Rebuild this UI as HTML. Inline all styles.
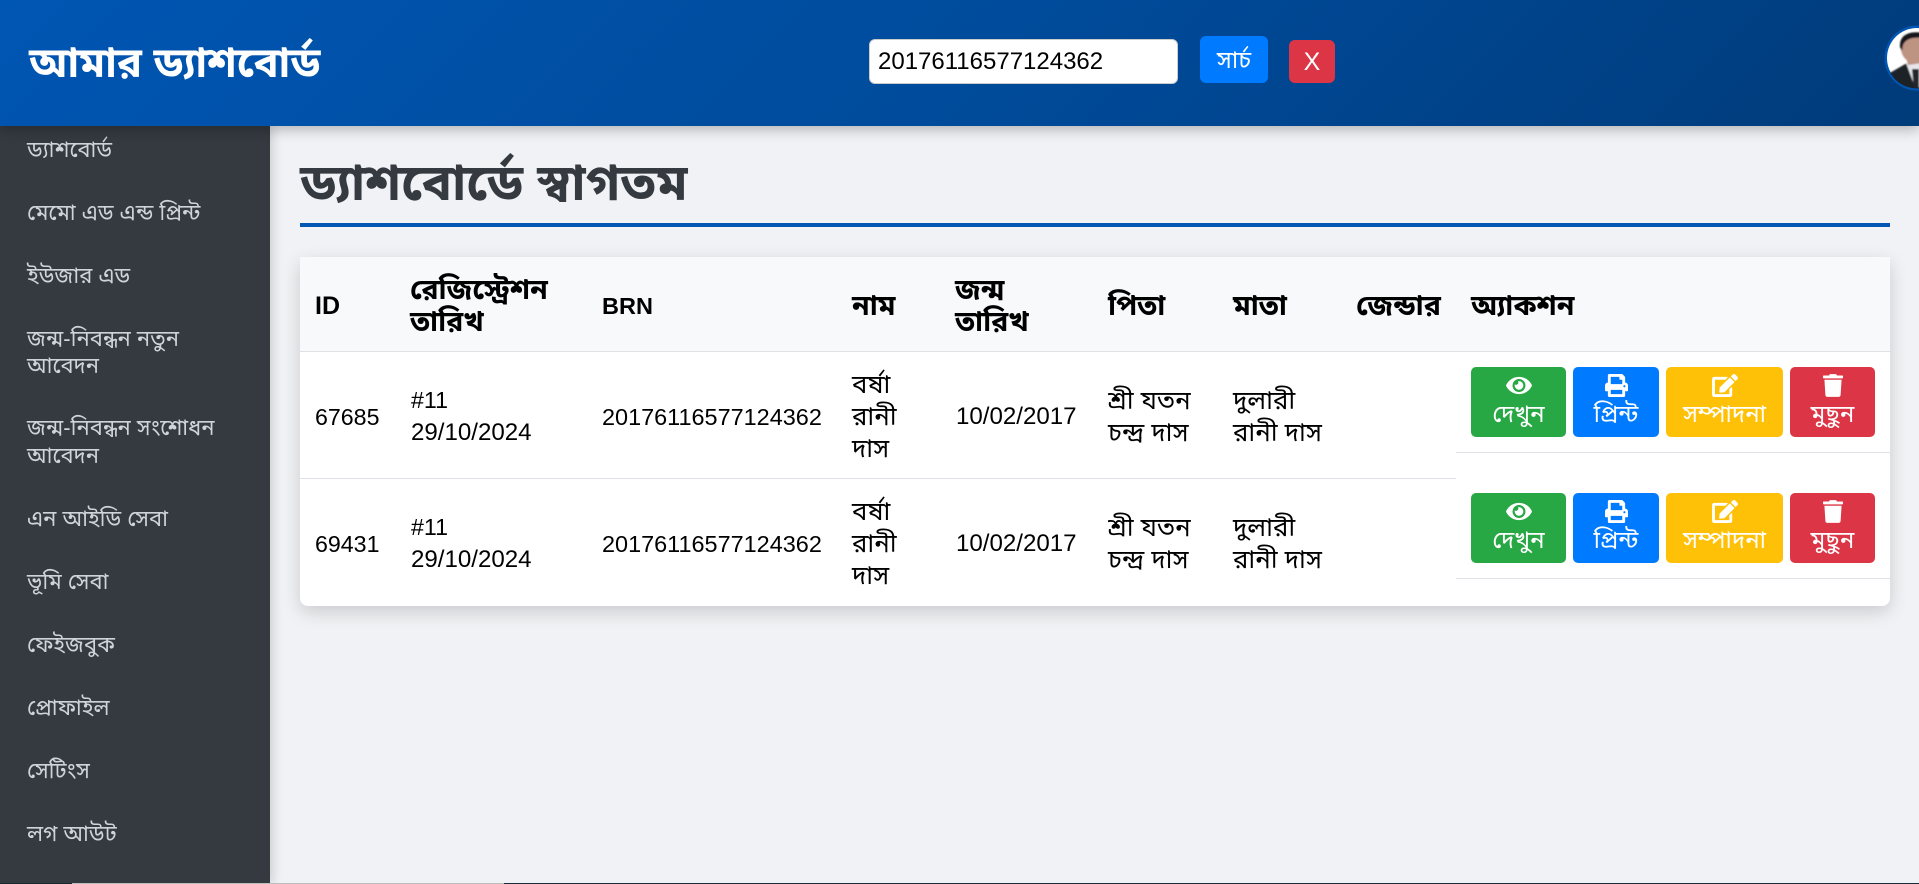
<!DOCTYPE html>
<html lang="bn"><head><meta charset="utf-8"><title>আমার ড্যাশবোর্ড</title>
<style>
*{box-sizing:border-box;margin:0;padding:0}
html,body{width:1919px;height:884px;overflow:hidden}
body{background:#f0f2f5;font-family:"Liberation Sans","Noto Sans Bengali","Noto Sans CJK SC",sans-serif;position:relative;color:#000}
.t{position:absolute;white-space:nowrap;line-height:32px;font-size:25.8px}
.th{font-weight:bold;font-size:28.5px}
.id{font-size:23.2px}.brn{font-size:23.45px}.dt{font-size:24.1px}
#header{position:absolute;left:0;top:0;width:1919px;height:126px;background:linear-gradient(135deg,#0056b3 0%,#004a99 55%,#003b7a 100%);box-shadow:0 4px 12px rgba(0,0,0,.25);z-index:3}
#side{position:absolute;left:0;top:126px;width:270px;height:758px;background:#343a40;box-shadow:3px 0 10px rgba(0,0,0,.15);z-index:2}
#side .t{left:27px;color:#ced4da;font-size:22px;line-height:27px}
#brand{position:absolute;left:29px;top:40px;color:#fff;font-weight:bold;font-size:41.7px;line-height:46px;white-space:nowrap}
#input{position:absolute;left:869px;top:39px;width:309px;height:45px;background:#fff;border:1px solid #ccc;border-radius:6px;font-size:24px;line-height:43px;padding-left:8px;color:#000;font-family:"Liberation Sans",Arial,sans-serif}
.hb{position:absolute;color:#fff;border-radius:6px;text-align:center;font-size:24px}
#h1{position:absolute;left:300px;top:152px;font-size:50.7px;line-height:62px;font-weight:bold;color:#343a40;white-space:nowrap}
#rule{position:absolute;left:300px;top:223px;width:1590px;height:4px;background:#0056b3}
#card{position:absolute;left:300px;top:257px;width:1590px;height:349px;background:#fff;border-radius:0 0 8px 8px;box-shadow:0 6px 18px rgba(0,0,0,.16);overflow:hidden}
#thead{position:absolute;left:300px;top:257px;width:1590px;height:95px;background:#f8f9fa;border-bottom:1px solid #dee2e6}
.ln{position:absolute;height:1px;background:#dee2e6}
.btn{position:absolute;height:70px;border-radius:5px;color:#fff;text-align:center;font-size:24px;line-height:30px}
.btn svg{position:absolute;top:7px;left:50%;height:23px;fill:#fff}
.btn span{position:absolute;left:0;right:0;top:33px;white-space:nowrap}
.g{background:#28a745}.p{background:#007bff}.y{background:#ffc107}.r{background:#dc3545}
</style></head><body>

<div id="card"></div>
<div id="thead"></div>
<div class="ln" style="left:300px;top:478px;width:1156px"></div>
<div class="ln" style="left:1456px;top:452px;width:434px"></div>
<div class="ln" style="left:1456px;top:578px;width:434px"></div>

<div id="h1">ড্যাশবোর্ডে স্বাগতম</div>
<div id="rule"></div>

<div class="t th" style="left:315px;top:290px;font-size:25px">ID</div>
<div class="t th" style="left:410px;top:274px">রেজিস্ট্রেশন</div>
<div class="t th" style="left:410px;top:306px">তারিখ</div>
<div class="t th" style="left:602px;top:290px;font-size:23.5px">BRN</div>
<div class="t th" style="left:852px;top:290px">নাম</div>
<div class="t th" style="left:955px;top:274px">জন্ম</div>
<div class="t th" style="left:955px;top:306px">তারিখ</div>
<div class="t th" style="left:1108px;top:290px">পিতা</div>
<div class="t th" style="left:1233px;top:290px">মাতা</div>
<div class="t th" style="left:1356px;top:290px">জেন্ডার</div>
<div class="t th" style="left:1471px;top:290px">অ্যাকশন</div>

<div class="t id" style="left:315px;top:401px">67685</div>
<div class="t id" style="left:411px;top:384px">#11</div>
<div class="t dt" style="left:411px;top:417px">29/10/2024</div>
<div class="t brn" style="left:602px;top:401px">20176116577124362</div>
<div class="t" style="left:852px;top:369px">বর্ষা</div>
<div class="t" style="left:852px;top:401px">রানী</div>
<div class="t" style="left:852px;top:433px">দাস</div>
<div class="t dt" style="left:956px;top:401px">10/02/2017</div>
<div class="t" style="left:1108px;top:385px">শ্রী যতন</div>
<div class="t" style="left:1108px;top:417px">চন্দ্র দাস</div>
<div class="t" style="left:1233px;top:385px">দুলারী</div>
<div class="t" style="left:1233px;top:417px">রানী দাস</div>

<div class="t id" style="left:315px;top:528px">69431</div>
<div class="t id" style="left:411px;top:511px">#11</div>
<div class="t dt" style="left:411px;top:544px">29/10/2024</div>
<div class="t brn" style="left:602px;top:528px">20176116577124362</div>
<div class="t" style="left:852px;top:496px">বর্ষা</div>
<div class="t" style="left:852px;top:528px">রানী</div>
<div class="t" style="left:852px;top:560px">দাস</div>
<div class="t dt" style="left:956px;top:528px">10/02/2017</div>
<div class="t" style="left:1108px;top:512px">শ্রী যতন</div>
<div class="t" style="left:1108px;top:544px">চন্দ্র দাস</div>
<div class="t" style="left:1233px;top:512px">দুলারী</div>
<div class="t" style="left:1233px;top:544px">রানী দাস</div>

<div class="btn g" style="left:1471px;top:367px;width:95px"><svg viewBox="0 0 576 512" style="width:26px;margin-left:-13px"><path d="M572.52 241.4C518.29 135.59 410.93 64 288 64S57.68 135.64 3.48 241.41a32.35 32.35 0 0 0 0 29.19C57.71 376.41 165.07 448 288 448s230.32-71.64 284.52-177.41a32.35 32.35 0 0 0 0-29.19zM288 400a144 144 0 1 1 144-144 143.93 143.93 0 0 1-144 144zm0-240a95.31 95.31 0 0 0-25.31 3.79 47.85 47.85 0 0 1-66.9 66.9A95.78 95.78 0 1 0 288 160z"/></svg><span>দেখুন</span></div>
<div class="btn p" style="left:1573px;top:367px;width:86px"><svg viewBox="0 0 512 512" style="width:23px;margin-left:-11.5px"><path d="M448 192V77.25c0-8.49-3.37-16.62-9.37-22.63L393.37 9.37c-6-6-14.14-9.37-22.63-9.37H96C78.33 0 64 14.33 64 32v160c-35.35 0-64 28.65-64 64v112c0 8.84 7.16 16 16 16h48v96c0 17.67 14.33 32 32 32h320c17.67 0 32-14.33 32-32v-96h48c8.84 0 16-7.16 16-16V256c0-35.35-28.65-64-64-64zm-64 256H128v-96h256v96zm0-224H128V64h192v48c0 8.84 7.16 16 16 16h48v96zm48 72c-13.25 0-24-10.75-24-24 0-13.26 10.75-24 24-24s24 10.74 24 24c0 13.25-10.75 24-24 24z"/></svg><span>প্রিন্ট</span></div>
<div class="btn y" style="left:1666px;top:367px;width:117px"><svg viewBox="0 0 576 512" style="width:26px;margin-left:-13px"><path d="M402.6 83.2l90.2 90.2c3.8 3.8 3.8 10 0 13.8L274.4 405.6l-92.8 10.3c-12.4 1.4-22.9-9.1-21.5-21.5l10.3-92.8L388.8 83.2c3.8-3.8 10-3.8 13.8 0zm162-22.9l-48.8-48.8c-15.2-15.2-39.9-15.2-55.2 0l-35.4 35.4c-3.8 3.8-3.8 10 0 13.8l90.2 90.2c3.8 3.8 10 3.8 13.8 0l35.4-35.4c15.2-15.3 15.2-40 0-55.2zM384 346.2V448H64V128h229.8c3.2 0 6.2-1.3 8.5-3.5l40-40c7.6-7.6 2.2-20.5-8.5-20.5H48C21.5 64 0 85.5 0 112v352c0 26.5 21.5 48 48 48h352c26.5 0 48-21.5 48-48V306.2c0-10.7-12.9-16-20.5-8.5l-40 40c-2.2 2.3-3.5 5.3-3.5 8.5z"/></svg><span>সম্পাদনা</span></div>
<div class="btn r" style="left:1790px;top:367px;width:85px"><svg viewBox="0 0 448 512" style="width:20px;margin-left:-10px"><path d="M432 32H312l-9.4-18.7A24 24 0 0 0 281.1 0H166.8a23.72 23.72 0 0 0-21.4 13.3L136 32H16A16 16 0 0 0 0 48v32a16 16 0 0 0 16 16h416a16 16 0 0 0 16-16V48a16 16 0 0 0-16-16zM53.2 467a48 48 0 0 0 47.9 45h245.8a48 48 0 0 0 47.9-45L416 128H32z"/></svg><span>মুছুন</span></div>

<div class="btn g" style="left:1471px;top:493px;width:95px"><svg viewBox="0 0 576 512" style="width:26px;margin-left:-13px"><path d="M572.52 241.4C518.29 135.59 410.93 64 288 64S57.68 135.64 3.48 241.41a32.35 32.35 0 0 0 0 29.19C57.71 376.41 165.07 448 288 448s230.32-71.64 284.52-177.41a32.35 32.35 0 0 0 0-29.19zM288 400a144 144 0 1 1 144-144 143.93 143.93 0 0 1-144 144zm0-240a95.31 95.31 0 0 0-25.31 3.79 47.85 47.85 0 0 1-66.9 66.9A95.78 95.78 0 1 0 288 160z"/></svg><span>দেখুন</span></div>
<div class="btn p" style="left:1573px;top:493px;width:86px"><svg viewBox="0 0 512 512" style="width:23px;margin-left:-11.5px"><path d="M448 192V77.25c0-8.49-3.37-16.62-9.37-22.63L393.37 9.37c-6-6-14.14-9.37-22.63-9.37H96C78.33 0 64 14.33 64 32v160c-35.35 0-64 28.65-64 64v112c0 8.84 7.16 16 16 16h48v96c0 17.67 14.33 32 32 32h320c17.67 0 32-14.33 32-32v-96h48c8.84 0 16-7.16 16-16V256c0-35.35-28.65-64-64-64zm-64 256H128v-96h256v96zm0-224H128V64h192v48c0 8.84 7.16 16 16 16h48v96zm48 72c-13.25 0-24-10.75-24-24 0-13.26 10.75-24 24-24s24 10.74 24 24c0 13.25-10.75 24-24 24z"/></svg><span>প্রিন্ট</span></div>
<div class="btn y" style="left:1666px;top:493px;width:117px"><svg viewBox="0 0 576 512" style="width:26px;margin-left:-13px"><path d="M402.6 83.2l90.2 90.2c3.8 3.8 3.8 10 0 13.8L274.4 405.6l-92.8 10.3c-12.4 1.4-22.9-9.1-21.5-21.5l10.3-92.8L388.8 83.2c3.8-3.8 10-3.8 13.8 0zm162-22.9l-48.8-48.8c-15.2-15.2-39.9-15.2-55.2 0l-35.4 35.4c-3.8 3.8-3.8 10 0 13.8l90.2 90.2c3.8 3.8 10 3.8 13.8 0l35.4-35.4c15.2-15.3 15.2-40 0-55.2zM384 346.2V448H64V128h229.8c3.2 0 6.2-1.3 8.5-3.5l40-40c7.6-7.6 2.2-20.5-8.5-20.5H48C21.5 64 0 85.5 0 112v352c0 26.5 21.5 48 48 48h352c26.5 0 48-21.5 48-48V306.2c0-10.7-12.9-16-20.5-8.5l-40 40c-2.2 2.3-3.5 5.3-3.5 8.5z"/></svg><span>সম্পাদনা</span></div>
<div class="btn r" style="left:1790px;top:493px;width:85px"><svg viewBox="0 0 448 512" style="width:20px;margin-left:-10px"><path d="M432 32H312l-9.4-18.7A24 24 0 0 0 281.1 0H166.8a23.72 23.72 0 0 0-21.4 13.3L136 32H16A16 16 0 0 0 0 48v32a16 16 0 0 0 16 16h416a16 16 0 0 0 16-16V48a16 16 0 0 0-16-16zM53.2 467a48 48 0 0 0 47.9 45h245.8a48 48 0 0 0 47.9-45L416 128H32z"/></svg><span>মুছুন</span></div>

<div id="side">
<div class="t" style="top:10px">ড্যাশবোর্ড</div>
<div class="t" style="top:73px">মেমো এড এন্ড প্রিন্ট</div>
<div class="t" style="top:136px">ইউজার এড</div>
<div class="t" style="top:199px">জন্ম-নিবন্ধন নতুন</div>
<div class="t" style="top:226px">আবেদন</div>
<div class="t" style="top:288px">জন্ম-নিবন্ধন সংশোধন</div>
<div class="t" style="top:316px">আবেদন</div>
<div class="t" style="top:379px">এন আইডি সেবা</div>
<div class="t" style="top:442px">ভূমি সেবা</div>
<div class="t" style="top:505px">ফেইজবুক</div>
<div class="t" style="top:568px">প্রোফাইল</div>
<div class="t" style="top:631px">সেটিংস</div>
<div class="t" style="top:694px">লগ আউট</div>
</div>

<div id="header">
<div id="brand">আমার ড্যাশবোর্ড</div>
<div id="input">20176116577124362</div>
<div class="hb" style="left:1200px;top:36px;width:68px;height:47px;background:#007bff;line-height:50px">সার্চ</div>
<div class="hb" style="left:1289px;top:40px;width:46px;height:43px;background:#dc3545;line-height:44px;font-size:25px;font-family:'Liberation Sans',sans-serif">X</div>
<svg style="position:absolute;left:1884px;top:25px" width="35" height="66" viewBox="0 0 35 66">
<defs><clipPath id="c"><circle cx="33" cy="33" r="30.5"/></clipPath><filter id="bl"><feGaussianBlur stdDeviation=".7"/></filter></defs>
<circle cx="33" cy="33" r="32.5" fill="#0056b3"/>
<circle cx="33" cy="33" r="30" fill="#fff"/>
<g clip-path="url(#c)"><g filter="url(#bl)">
<path d="M4 49 L23 38 L40 40 L40 66 L4 66Z" fill="#1d2126"/>
<path d="M22 38 L40 38 L40 62 L31 62Z" fill="#e6e6ec"/>
<path d="M28 44 L35 44 L35 66 L30 66Z" fill="#22262c"/>
<ellipse cx="31" cy="23" rx="14" ry="15" fill="#bd9382"/>
<path d="M16 22 C15 7 30 6 40 8 L40 13 C30 12 22 13 19 20 L18 26Z" fill="#17161c"/>
<path d="M22 32 L38 38 L24 40Z" fill="#bd9382"/>
</g></g>
</svg>
</div>

<div style="position:absolute;left:0;top:883px;width:72px;height:1px;background:#1a2a30;z-index:5"></div>
<div style="position:absolute;left:72px;top:883px;width:432px;height:1px;background:#bdbdbd;z-index:5"></div>
<div style="position:absolute;left:504px;top:883px;width:1415px;height:1px;background:#1c2b3a;z-index:5"></div>
</body></html>
